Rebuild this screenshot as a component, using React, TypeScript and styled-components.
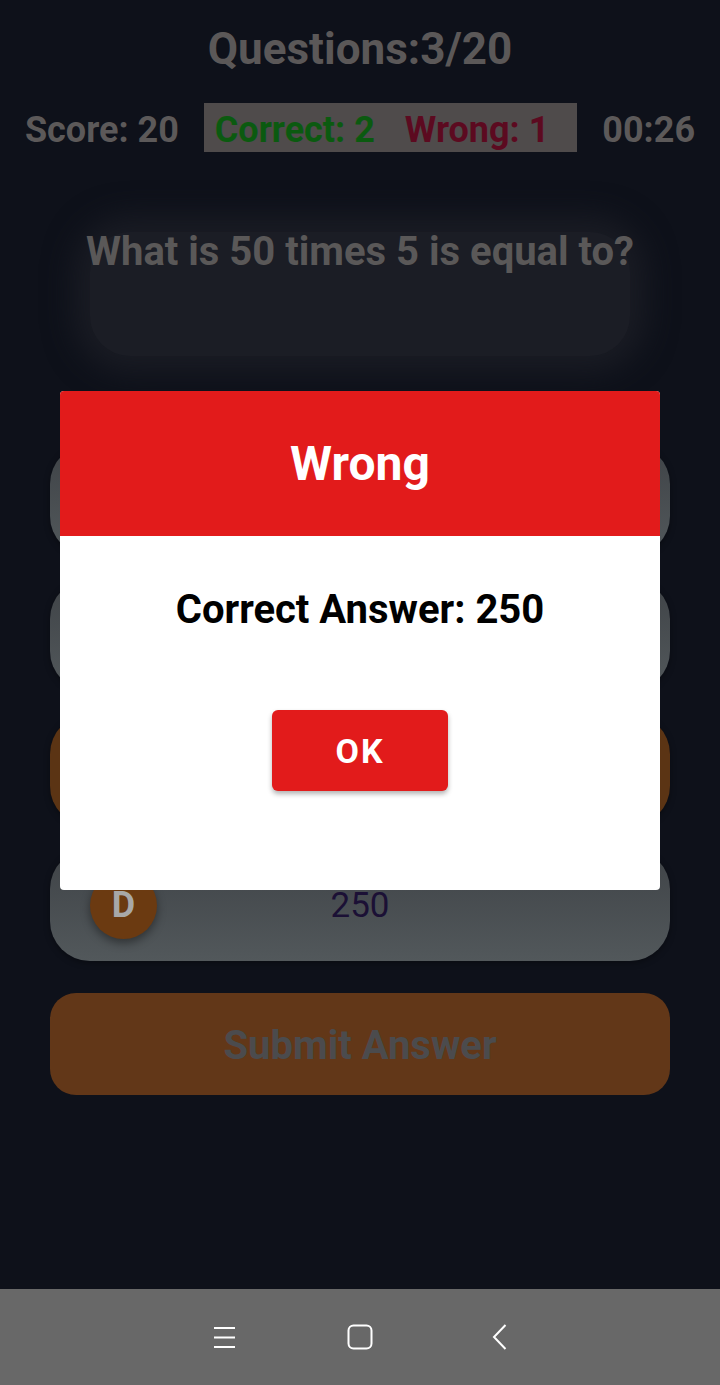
import styled, { createGlobalStyle } from 'styled-components';

const GlobalStyle = createGlobalStyle`
  html, body {
    margin: 0;
    padding: 0;
    background: #0e111a;
  }
  * {
    box-sizing: border-box;
  }
`;

const Page = styled.div`
  position: relative;
  display: flex;
  flex-direction: column;
  width: 720px;
  height: 1385px;
  background: #0e111a;
  font-family: Roboto, 'Noto Sans', sans-serif;
  overflow: hidden;
`;

const Main = styled.div`
  flex: 1;
  display: flex;
  flex-direction: column;
  align-items: center;
`;

const Title = styled.h1`
  margin: 25px 0 0;
  font-size: 44px;
  line-height: 48px;
  font-weight: 700;
  color: #5b5858;
`;

const StatsRow = styled.div`
  width: 100%;
  margin-top: 30px;
  display: flex;
  justify-content: space-evenly;
  align-items: baseline;
`;

const Stat = styled.span<{ $color?: string }>`
  font-size: 36px;
  line-height: 42px;
  font-weight: 700;
  color: ${(p) => p.$color || '#5c5959'};
`;

const TallyBox = styled.div`
  display: flex;
  align-items: flex-start;
  gap: 30px;
  height: 49px;
  padding: 6px 28px 0 11px;
  background: #4f4b4b;
`;

const QuestionCard = styled.div`
  width: 540px;
  height: 124px;
  margin-top: 80px;
  display: flex;
  justify-content: center;
  align-items: flex-start;
  background: #1b1d25;
  border-radius: 40px;
  box-shadow: 0 0 30px 16px #1a1c24;
`;

const QuestionText = styled.h2`
  margin: -4px 0 0;
  font-size: 40px;
  line-height: 48px;
  font-weight: 700;
  color: #5a5858;
  white-space: nowrap;
`;

const OptionList = styled.div`
  width: 620px;
  margin-top: 88px;
  display: flex;
  flex-direction: column;
  gap: 23px;
`;

const Option = styled.div<{ $selected?: boolean }>`
  height: 112px;
  border-radius: 40px;
  padding: 0 40px;
  display: grid;
  grid-template-columns: 67px 1fr 67px;
  align-items: center;
  background: ${(p) =>
    p.$selected ? '#5b3414' : 'linear-gradient(180deg, #3f4347 0%, #52585b 100%)'};
  box-shadow: 0 2px 6px rgba(0, 0, 0, 0.35);
`;

const Letter = styled.div`
  width: 67px;
  height: 67px;
  border-radius: 50%;
  background: #6b3a11;
  color: #a8a8a8;
  font-size: 36px;
  font-weight: 700;
  display: flex;
  align-items: center;
  justify-content: center;
  box-shadow: 0 4px 10px rgba(0, 0, 0, 0.4);
`;

const OptionValue = styled.span`
  text-align: center;
  font-size: 35px;
  color: #1b1035;
`;

const SubmitButton = styled.button`
  width: 620px;
  height: 102px;
  margin-top: 32px;
  padding-top: 4px;
  border: none;
  border-radius: 26px;
  background: #623718;
  color: #4b4b4d;
  font-family: Roboto, 'Noto Sans', sans-serif;
  font-size: 40px;
  font-weight: 700;
`;

const NavBar = styled.div`
  height: 96px;
  background: #686868;
  display: flex;
  justify-content: center;
  align-items: center;
  gap: 76px;
`;

const NavSlot = styled.div<{ $shift?: number }>`
  width: 60px;
  display: flex;
  justify-content: center;
  align-items: center;
  padding-left: ${(p) => p.$shift || 0}px;
`;

const Dialog = styled.div`
  position: absolute;
  top: 391px;
  left: 60px;
  width: 600px;
  height: 499px;
  background: #ffffff;
  border-radius: 4px;
  overflow: hidden;
  display: flex;
  flex-direction: column;
  align-items: center;
`;

const DialogHeader = styled.div`
  width: 100%;
  height: 145px;
  background: #e21b1b;
  display: flex;
  align-items: center;
  justify-content: center;
  color: #ffffff;
  font-size: 48px;
  font-weight: 700;
`;

const DialogMessage = styled.p`
  margin: 50px 0 0;
  font-size: 40px;
  line-height: 48px;
  font-weight: 700;
  color: #000000;
`;

const OkButton = styled.button`
  margin-top: 76px;
  width: 176px;
  height: 81px;
  border: none;
  border-radius: 6px;
  background: #e21b1b;
  color: #ffffff;
  font-family: Roboto, 'Noto Sans', sans-serif;
  font-size: 34px;
  font-weight: 700;
  letter-spacing: 2px;
  box-shadow: 0 3px 5px rgba(0, 0, 0, 0.3);
`;

const options = [
  { letter: 'A', value: '200' },
  { letter: 'B', value: '255' },
  { letter: 'C', value: '245', selected: true },
  { letter: 'D', value: '250' },
];

export default function App() {
  return (
    <Page>
      <GlobalStyle />
      <Main>
        <Title>Questions:3/20</Title>
        <StatsRow>
          <Stat>Score: 20</Stat>
          <TallyBox>
            <Stat $color="#0b5a10">Correct: 2</Stat>
            <Stat $color="#5c0a20">Wrong: 1</Stat>
          </TallyBox>
          <Stat>00:26</Stat>
        </StatsRow>
        <QuestionCard>
          <QuestionText>What is 50 times 5 is equal to?</QuestionText>
        </QuestionCard>
        <OptionList>
          {options.map((o) => (
            <Option key={o.letter} $selected={o.selected}>
              <Letter>{o.letter}</Letter>
              <OptionValue>{o.value}</OptionValue>
            </Option>
          ))}
        </OptionList>
        <SubmitButton>Submit Answer</SubmitButton>
      </Main>
      <NavBar>
        <NavSlot>
          <svg width="24" height="24" viewBox="0 0 24 24" fill="none" stroke="#fff" strokeWidth="2">
            <path d="M2 3h21M2 12.5h21M2 22h21" />
          </svg>
        </NavSlot>
        <NavSlot>
          <svg width="26" height="26" viewBox="0 0 26 26" fill="none" stroke="#fff" strokeWidth="2">
            <rect x="1.5" y="1.5" width="23" height="23" rx="5" />
          </svg>
        </NavSlot>
        <NavSlot $shift={8}>
          <svg width="16" height="26" viewBox="0 0 16 26" fill="none" stroke="#fff" strokeWidth="2">
            <path d="M13.5 1L2 13l11.5 12" />
          </svg>
        </NavSlot>
      </NavBar>
      <Dialog>
        <DialogHeader>Wrong</DialogHeader>
        <DialogMessage>Correct Answer: 250</DialogMessage>
        <OkButton>OK</OkButton>
      </Dialog>
    </Page>
  );
}
